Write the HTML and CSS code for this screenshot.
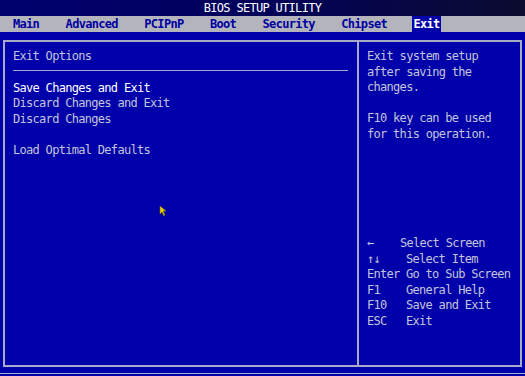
FILE: index.html
```html
<!DOCTYPE html>
<html lang="en">
<head>
  <meta charset="UTF-8" />
  <title>BIOS Setup Utility</title>
  <link rel="stylesheet" href="styles.css">
</head>
<body>
  <div class="screen">
    <div class="title-bar">BIOS SETUP UTILITY</div>
    <div class="menu-bar">
      <span class="menu-item">Main</span>
      <span class="menu-item">Advanced</span>
      <span class="menu-item">PCIPnP</span>
      <span class="menu-item">Boot</span>
      <span class="menu-item">Security</span>
      <span class="menu-item">Chipset</span>
      <span class="menu-item active">Exit</span>
    </div>
    <div class="main">
      <div class="frame">
        <div class="left-panel">
          <div class="section-title">Exit Options</div>
          <div class="rule"></div>
          <div class="option selected">Save Changes and Exit</div>
          <div class="option">Discard Changes and Exit</div>
          <div class="option">Discard Changes</div>
          <div class="option blank"></div>
          <div class="option">Load Optimal Defaults</div>
        </div>
        <div class="right-panel">
          <div class="help-text">
            <div>Exit system setup</div>
            <div>after saving the</div>
            <div>changes.</div>
            <div class="blank"></div>
            <div>F10 key can be used</div>
            <div>for this operation.</div>
          </div>
          <div class="keys">
            <div class="key-row"><span class="key">&larr;</span><span class="desc shift">Select Screen</span></div>
            <div class="key-row"><span class="key">&uarr;&darr;</span><span class="desc">Select Item</span></div>
            <div class="key-row"><span class="key">Enter</span><span class="desc">Go to Sub Screen</span></div>
            <div class="key-row"><span class="key">F1</span><span class="desc">General Help</span></div>
            <div class="key-row"><span class="key">F10</span><span class="desc">Save and Exit</span></div>
            <div class="key-row"><span class="key">ESC</span><span class="desc">Exit</span></div>
          </div>
        </div>
      </div>
      <div class="bottom-line"></div>
    </div>
    <svg class="cursor" width="8" height="12" viewBox="0 0 8 12">
      <path d="M1 1 L1 9 L3 7 L5 11 L6 10 L4 6 L7 6 Z" fill="#e8d000" stroke="#806800" stroke-width="0.6"/>
    </svg>
  </div>
</body>
</html>
```

FILE: styles.css
```css
:root {
  --blue: #0000aa;
  --line: #a8a8c8;
  --text: #c4c4d8;
  --menu-bg: #b4b4bc;
  --font-bios: 'DejaVu Sans Mono', 'Liberation Mono', monospace;
}

html, body {
  margin: 0;
  padding: 0;
}

* {
  box-sizing: border-box;
}

body {
  font-family: var(--font-bios);
  font-size: 12px;
  letter-spacing: -0.7px;
  line-height: 15.5px;
  color: var(--text);
  background: var(--blue);
}

.screen {
  width: 525px;
  height: 376px;
  display: flex;
  flex-direction: column;
  position: relative;
  overflow: hidden;
}

.title-bar {
  height: 16px;
  line-height: 17px;
  text-align: center;
  color: #ffffff;
  background: linear-gradient(90deg, #00006e 0%, #00005a 50%, #0c0c30 100%);
}

.menu-bar {
  height: 16px;
  line-height: 17px;
  display: flex;
  gap: 26.5px;
  padding-left: 13px;
  background: var(--menu-bg);
  color: #0000a0;
  font-weight: bold;
}

.menu-item.active {
  background: var(--blue);
  color: #ffffff;
  margin-left: -1px;
  padding: 0 1px;
}

.main {
  flex: 1;
  display: flex;
  flex-direction: column;
  padding: 8px 3px 0 3px;
}

.frame {
  height: 327px;
  border: 2px solid var(--line);
  display: flex;
}

.left-panel {
  width: 354px;
  padding: 7px 9px 0 8px;
  border-right: 2px solid var(--line);
}

.rule {
  height: 1px;
  background: var(--line);
  margin: 5px 0 10px;
}

.option.selected {
  color: #ffffff;
}

.blank {
  height: 15.5px;
}

.right-panel {
  flex: 1;
  padding: 7px 0 36px 8px;
  display: flex;
  flex-direction: column;
  justify-content: space-between;
}

.key-row {
  display: flex;
}

.key {
  width: 39px;
}

.desc.shift {
  margin-left: -6px;
}

.bottom-line {
  height: 1px;
  margin: 6px -3px 0;
  background: var(--line);
}

.cursor {
  position: absolute;
  left: 159px;
  top: 205px;
}
```
